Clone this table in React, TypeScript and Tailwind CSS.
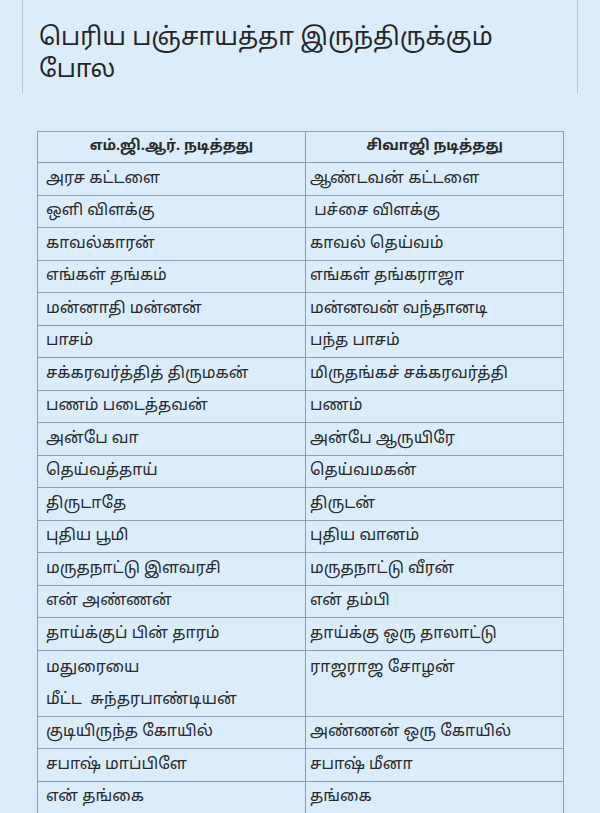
const rows: [string, string][] = [
  ['அரச கட்டளை', 'ஆண்டவன் கட்டளை'],
  ['ஒளி விளக்கு', ' பச்சை விளக்கு'],
  ['காவல்காரன்', 'காவல் தெய்வம்'],
  ['எங்கள் தங்கம்', 'எங்கள் தங்கராஜா'],
  ['மன்னாதி மன்னன்', 'மன்னவன் வந்தானடி'],
  ['பாசம்', 'பந்த பாசம்'],
  ['சக்கரவர்த்தித் திருமகன்', 'மிருதங்கச் சக்கரவர்த்தி'],
  ['பணம் படைத்தவன்', 'பணம்'],
  ['அன்பே வா', 'அன்பே ஆருயிரே'],
  ['தெய்வத்தாய்', 'தெய்வமகன்'],
  ['திருடாதே', 'திருடன்'],
  ['புதிய பூமி', 'புதிய வானம்'],
  ['மருதநாட்டு இளவரசி', 'மருதநாட்டு வீரன்'],
  ['என் அண்ணன்', 'என் தம்பி'],
  ['தாய்க்குப் பின் தாரம்', 'தாய்க்கு ஒரு தாலாட்டு'],
]

const tail: [string, string][] = [
  ['குடியிருந்த கோயில்', 'அண்ணன் ஒரு கோயில்'],
  ['சபாஷ் மாப்பிளே', 'சபாஷ் மீனா'],
  ['என் தங்கை', 'தங்கை'],
]

function Row({ left, right }: { left: string; right: string }) {
  return (
    <tr className="h-[32.5px]">
      <td className="border border-[#8d9cb0] px-2 align-middle">{left}</td>
      <td className="border border-[#8d9cb0] px-1 align-middle whitespace-pre">{right}</td>
    </tr>
  )
}

export default function App() {
  return (
    <div className="h-[813px] w-[600px] overflow-hidden bg-[#dbedfb] font-['Noto_Sans_Tamil','Lohit_Tamil','Noto_Sans',sans-serif] text-[#2b2b2b]">
      <div className="mx-[22px] h-[93px] border-x border-[#b9c5d2] pl-4 pt-[23px]">
        <h1 className="text-[24.5px] leading-[32px] text-[#262626]">
          <span className="block">பெரிய பஞ்சாயத்தா இருந்திருக்கும்</span>
          <span className="block">போல</span>
        </h1>
      </div>

      <table className="ml-[37px] mt-[38px] w-[526px] table-fixed border-collapse text-[16px] text-[#2a2a2a]">
        <colgroup>
          <col className="w-[268px]" />
          <col className="w-[258px]" />
        </colgroup>
        <thead>
          <tr className="h-[31px] text-[14.5px]">
            <th className="border border-[#8d9cb0] text-center font-bold">எம்.ஜி.ஆர். நடித்தது</th>
            <th className="border border-[#8d9cb0] text-center font-bold">சிவாஜி நடித்தது</th>
          </tr>
        </thead>
        <tbody>
          {rows.map(([l, r]) => (
            <Row key={l} left={l} right={r} />
          ))}
          <tr className="h-[65px]">
            <td className="border border-[#8d9cb0] px-2 align-top">
              <div className="pt-[1px] leading-[32px]">
                மதுரையை
                <br />
                மீட்ட&nbsp; சுந்தரபாண்டியன்
              </div>
            </td>
            <td className="border border-[#8d9cb0] px-1 align-top">
              <div className="pt-[1px] leading-[32px]">ராஜராஜ சோழன்</div>
            </td>
          </tr>
          {tail.map(([l, r]) => (
            <Row key={l} left={l} right={r} />
          ))}
        </tbody>
      </table>
    </div>
  )
}
